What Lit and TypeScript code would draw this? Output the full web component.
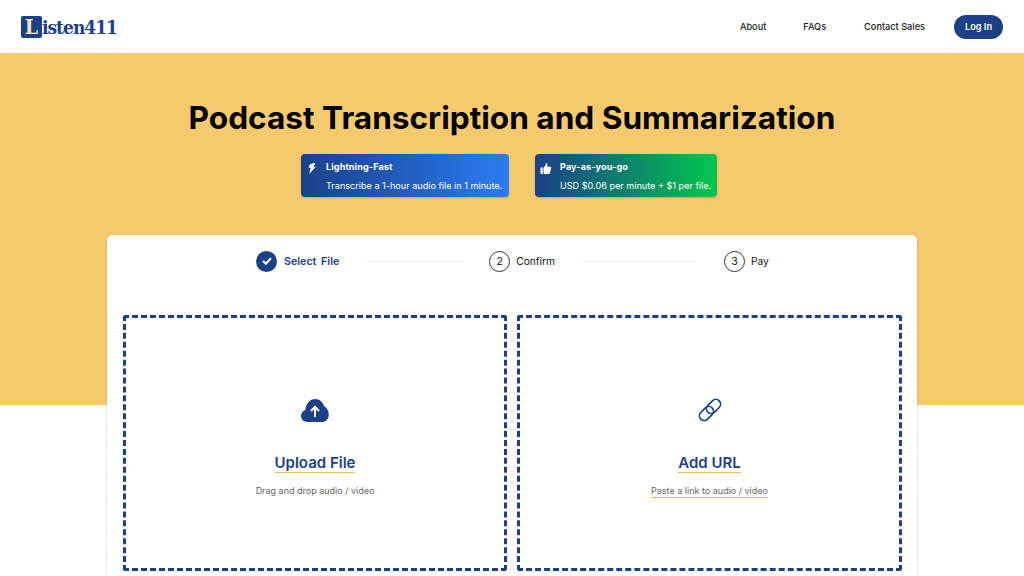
import { LitElement, html, css } from "lit";
import { customElement } from "lit/decorators.js";

@customElement("app-root")
export class AppRoot extends LitElement {
  static styles = css`
    :host { display: block; width: 1024px; height: 576px; overflow: hidden; background: #fff; font-family: Inter, "Liberation Sans", sans-serif; color: #111; }
    header { height: 53px; display: flex; align-items: center; padding: 0 21px; box-sizing: border-box; background: #fff; }
    .logo { display: flex; align-items: center; font-family: "DejaVu Serif Condensed", "DejaVu Serif", serif; font-weight: 700; font-size: 19px; color: #1b4088; letter-spacing: -1px; flex: 1; }
    .logo .l { width: 21px; height: 22px; background: #1b4088; border-radius: 2px; color: #f8e7bd; font-size: 21px; display: flex; align-items: center; justify-content: center; line-height: 1; letter-spacing: 0; }
    nav { display: flex; align-items: center; font-size: 9.2px; font-weight: 500; color: #1a1a1a; }
    nav a { display: block; }
    nav a.about { margin-right: 37px; }
    nav a.faqs { margin-right: 38px; }
    nav a.sales { margin-right: 29px; }
    .login { width: 49px; height: 24px; border-radius: 12px; background: #1b4088; color: #fff; font-weight: 600; font-size: 9.2px; display: flex; align-items: center; justify-content: center; }
    .hero { height: 352px; background: #f5ca6f; display: flex; flex-direction: column; align-items: center; box-sizing: border-box; padding-top: 46px; }
    h1 { margin: 0; font-size: 31.6px; line-height: 38px; font-weight: 700; color: #000; }
    .chips { display: flex; gap: 26px; margin-top: 17px; margin-right: 6px; }
    .chip { height: 43px; border-radius: 4px; display: flex; box-sizing: border-box; color: #fff; font-size: 9.1px; box-shadow: 0 1px 2px rgba(0,0,0,.18); }
    .chip.a { width: 208px; background: linear-gradient(90deg, #1b4088, #2b7bf4); }
    .chip.b { width: 182px; background: linear-gradient(90deg, #1b4088, #00c74e); }
    .chip .ic { width: 25px; flex: none; display: flex; justify-content: center; padding-top: 9px; padding-right: 3px; box-sizing: border-box; }
    .chip .tx { display: flex; flex-direction: column; padding-top: 7px; white-space: nowrap; }
    .chip .t { font-weight: 700; line-height: 12px; letter-spacing: .1px; }
    .chip .d { line-height: 12px; margin-top: 6.5px; font-weight: 400; }
    .card { margin: -170px auto 0; width: 810px; height: 400px; background: #fff; border-radius: 6px; box-shadow: 0 1px 3px rgba(0,0,0,.2); box-sizing: border-box; padding: 0 16px; position: relative; }
    .steps { height: 80px; display: flex; align-items: flex-start; padding-top: 15px; box-sizing: border-box; padding-left: 133px; font-size: 10.2px; }
    .step { display: flex; align-items: center; height: 22px; white-space: nowrap; }
    .num { width: 19px; height: 19px; border: 1px solid #333; border-radius: 50%; display: flex; align-items: center; justify-content: center; font-size: 10.5px; margin-right: 6px; }
    .check { width: 21px; height: 21px; border-radius: 50%; background: #1b4088; display: flex; align-items: center; justify-content: center; margin-right: 7px; }
    .sel { color: #1b4088; font-weight: 600; word-spacing: 2px; font-size: 10.7px; }
    .line { height: 1px; background: #efefef; margin-top: 11px; }
    .l1 { width: 97px; margin-left: 27px; margin-right: 26px; }
    .l2 { width: 115px; margin-left: 26px; margin-right: 28px; }
    .boxes { display: grid; grid-template-columns: 384px 385px; gap: 10px; }
    .box { height: 256px; border: 3px dashed #1b4088; border-radius: 3px; box-sizing: border-box; display: flex; flex-direction: column; align-items: center; padding-top: 79px; }
    .icon { height: 26px; display: flex; align-items: center; justify-content: center; }
    .title { margin-top: 31px; font-size: 15px; line-height: 18px; font-weight: 600; color: #1b4088; border-bottom: 1px solid #f3bd55; }
    .sub { margin-top: 11px; font-size: 9px; line-height: 13px; color: #666; }
    .sub.u { border-bottom: 1px solid #f3bd55; }
  `;

  render() {
    return html`
      <header>
        <div class="logo"><span class="l">L</span><span>isten411</span></div>
        <nav>
          <a class="about">About</a>
          <a class="faqs">FAQs</a>
          <a class="sales">Contact Sales</a>
          <div class="login">Log In</div>
        </nav>
      </header>
      <section class="hero">
        <h1>Podcast Transcription and Summarization</h1>
        <div class="chips">
          <div class="chip a">
            <div class="ic">
              <svg width="9" height="11" viewBox="0 0 9 12"><path fill="#fff" d="M5.600 0 1.200 1.900.4 5.600l2.400-.7L.6 12l7.900-8.200-3.100.8L7.500.2z"/></svg>
            </div>
            <div class="tx"><span class="t">Lightning-Fast</span><span class="d">Transcribe a 1-hour audio file in 1 minute.</span></div>
          </div>
          <div class="chip b">
            <div class="ic">
              <svg width="12" height="11" viewBox="0 0 11 11"><path fill="#fff" d="M0 4.600h2.200V11H0zM3 4.800 5.300 2V.3c1-.5 1.900.3 1.700 1.600l-.4 1.900h3.200c.8 0 1.100.7.9 1.300L9.400 10c-.2.6-.6 1-1.200 1H4.200C3.500 11 3 10.500 3 9.900z"/></svg>
            </div>
            <div class="tx"><span class="t">Pay-as-you-go</span><span class="d">USD $0.06 per minute + $1 per file.</span></div>
          </div>
        </div>
      </section>
      <section class="card">
        <div class="steps">
          <div class="step">
            <span class="check"><svg width="10" height="8" viewBox="0 0 10 8"><path d="M1 4l2.800 2.800L9 1.300" fill="none" stroke="#fff" stroke-width="2"/></svg></span>
            <span class="sel">Select File</span>
          </div>
          <div class="line l1"></div>
          <div class="step"><span class="num">2</span>Confirm</div>
          <div class="line l2"></div>
          <div class="step"><span class="num">3</span>Pay</div>
        </div>
        <div class="boxes">
          <div class="box">
            <div class="icon">
              <svg width="28" height="23" viewBox="0 0 28 23"><path fill="#1b4088" d="M6.500 23C2.900 23 0 20.300 0 16.800c0-2.800 1.800-5.100 4.400-5.900C4.700 4.900 9 0 14.100 0c4.200 0 7.800 2.800 9 7 2.700 1.500 4.700 4.800 4.700 8.700 0 4-3 7.300-6.700 7.300z"/><path d="M14 18V8.500M10 12l4-4 4 4" fill="none" stroke="#fff" stroke-width="2"/></svg>
            </div>
            <div class="title">Upload File</div>
            <div class="sub">Drag and drop audio / video</div>
          </div>
          <div class="box">
            <div class="icon">
              <svg width="26" height="26" viewBox="0 0 26 26" fill="none" stroke="#1b4088" stroke-width="1.700"><rect x="-4.750" y="-8" width="9.500" height="16" rx="4.750" transform="translate(9.460 16.540) rotate(45)"/><rect x="-4.750" y="-8" width="9.500" height="16" rx="4.750" transform="translate(16.540 9.460) rotate(45)"/></svg>
            </div>
            <div class="title">Add URL</div>
            <div class="sub u">Paste a link to audio / video</div>
          </div>
        </div>
      </section>
    `;
  }
}
